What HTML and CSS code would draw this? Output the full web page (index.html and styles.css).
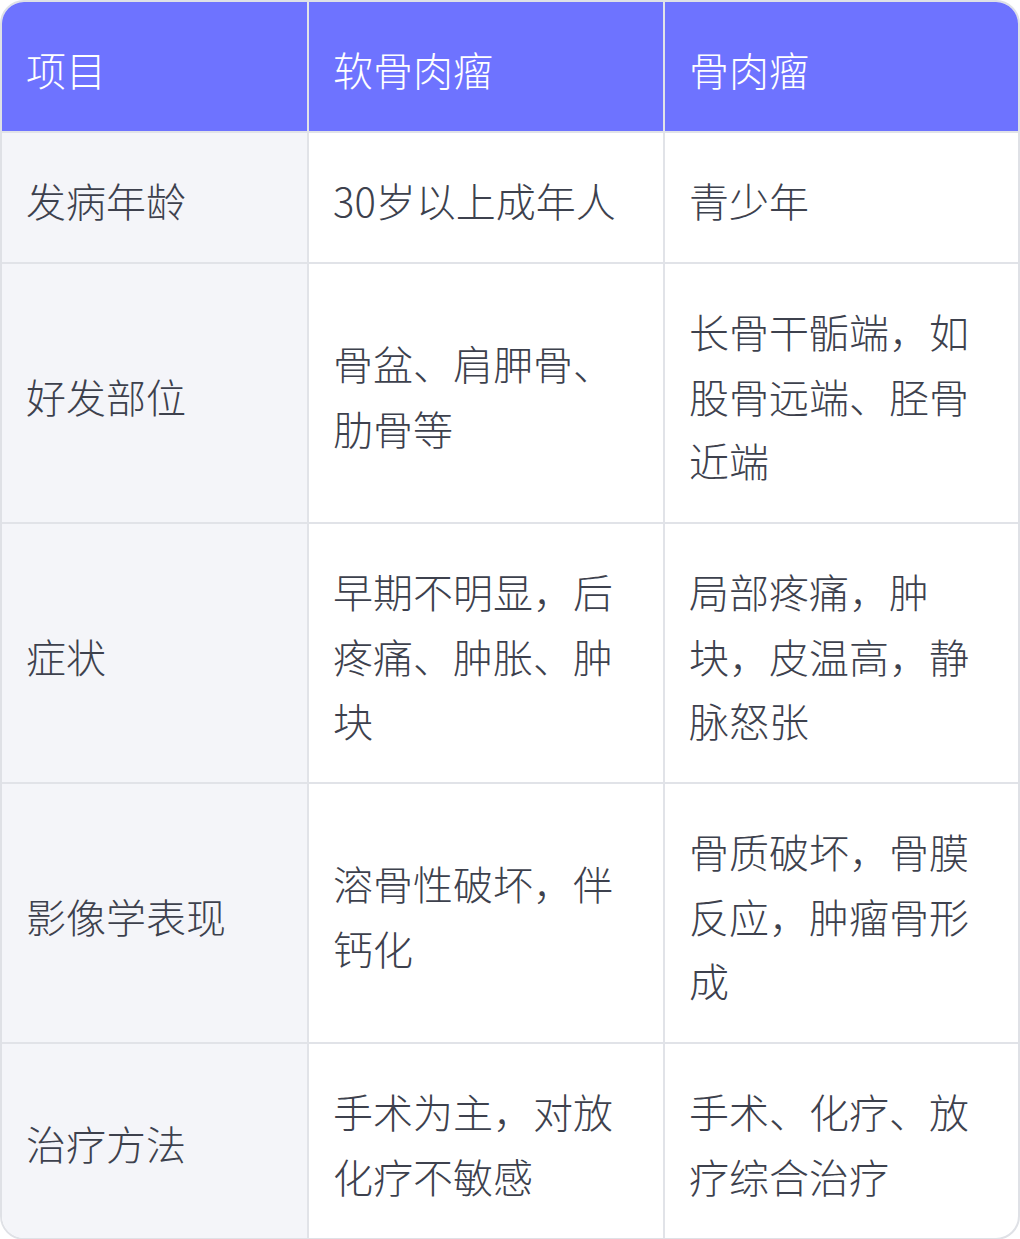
FILE: index.html
```html
<!DOCTYPE html>
<html lang="zh-CN">
<head>
<meta charset="utf-8">
<title>软骨肉瘤与骨肉瘤对比</title>
<link rel="stylesheet" href="styles.css">
</head>
<body>
<div class="wrap">
  <table class="cmp">
    <colgroup>
      <col class="c1">
      <col class="c2">
      <col class="c3">
    </colgroup>
    <thead>
      <tr>
        <th>项目</th>
        <th>软骨肉瘤</th>
        <th>骨肉瘤</th>
      </tr>
    </thead>
    <tbody>
      <tr>
        <td class="key">发病年龄</td>
        <td>30岁以上成年人</td>
        <td>青少年</td>
      </tr>
      <tr>
        <td class="key">好发部位</td>
        <td>骨盆、肩胛骨、肋骨等</td>
        <td>长骨干骺端，如股骨远端、胫骨近端</td>
      </tr>
      <tr>
        <td class="key">症状</td>
        <td>早期不明显，后疼痛、肿胀、肿块</td>
        <td>局部疼痛，肿块，皮温高，静脉怒张</td>
      </tr>
      <tr>
        <td class="key">影像学表现</td>
        <td>溶骨性破坏，伴钙化</td>
        <td>骨质破坏，骨膜反应，肿瘤骨形成</td>
      </tr>
      <tr>
        <td class="key">治疗方法</td>
        <td>手术为主，对放化疗不敏感</td>
        <td>手术、化疗、放疗综合治疗</td>
      </tr>
    </tbody>
  </table>
</div>
</body>
</html>
```

FILE: styles.css
```css
html, body {
  margin: 0;
  padding: 0;
  background: #ffffff;
}

.wrap {
  width: 1020px;
  box-sizing: border-box;
  border: 2px solid #dfe1e6;
  border-radius: 24px;
  overflow: hidden;
  background: #ffffff;
}

.cmp {
  width: 100%;
  table-layout: fixed;
  border-collapse: separate;
  border-spacing: 0;
  font-family: "Noto Sans CJK SC", "Noto Sans", sans-serif;
  font-size: 40px;
  font-weight: 300;
  line-height: 64.5px;
  color: #3d414d;
}

.c1 { width: 307px; }
.c2 { width: 356px; }
.c3 { width: 353px; }

.cmp th,
.cmp td {
  padding: 35px 24px 29.5px 24px;
  text-align: left;
  vertical-align: middle;
  border-right: 2px solid #e1e3e8;
  border-bottom: 2px solid #e1e3e8;
  word-break: break-all;
}

.cmp th:last-child,
.cmp td:last-child {
  border-right: none;
}

.cmp tbody tr:last-child td {
  border-bottom: none;
}

.cmp th {
  background: #6e73ff;
  color: #ffffff;
  font-weight: 300;
}

.cmp td.key {
  background: #f4f5f9;
}
```
